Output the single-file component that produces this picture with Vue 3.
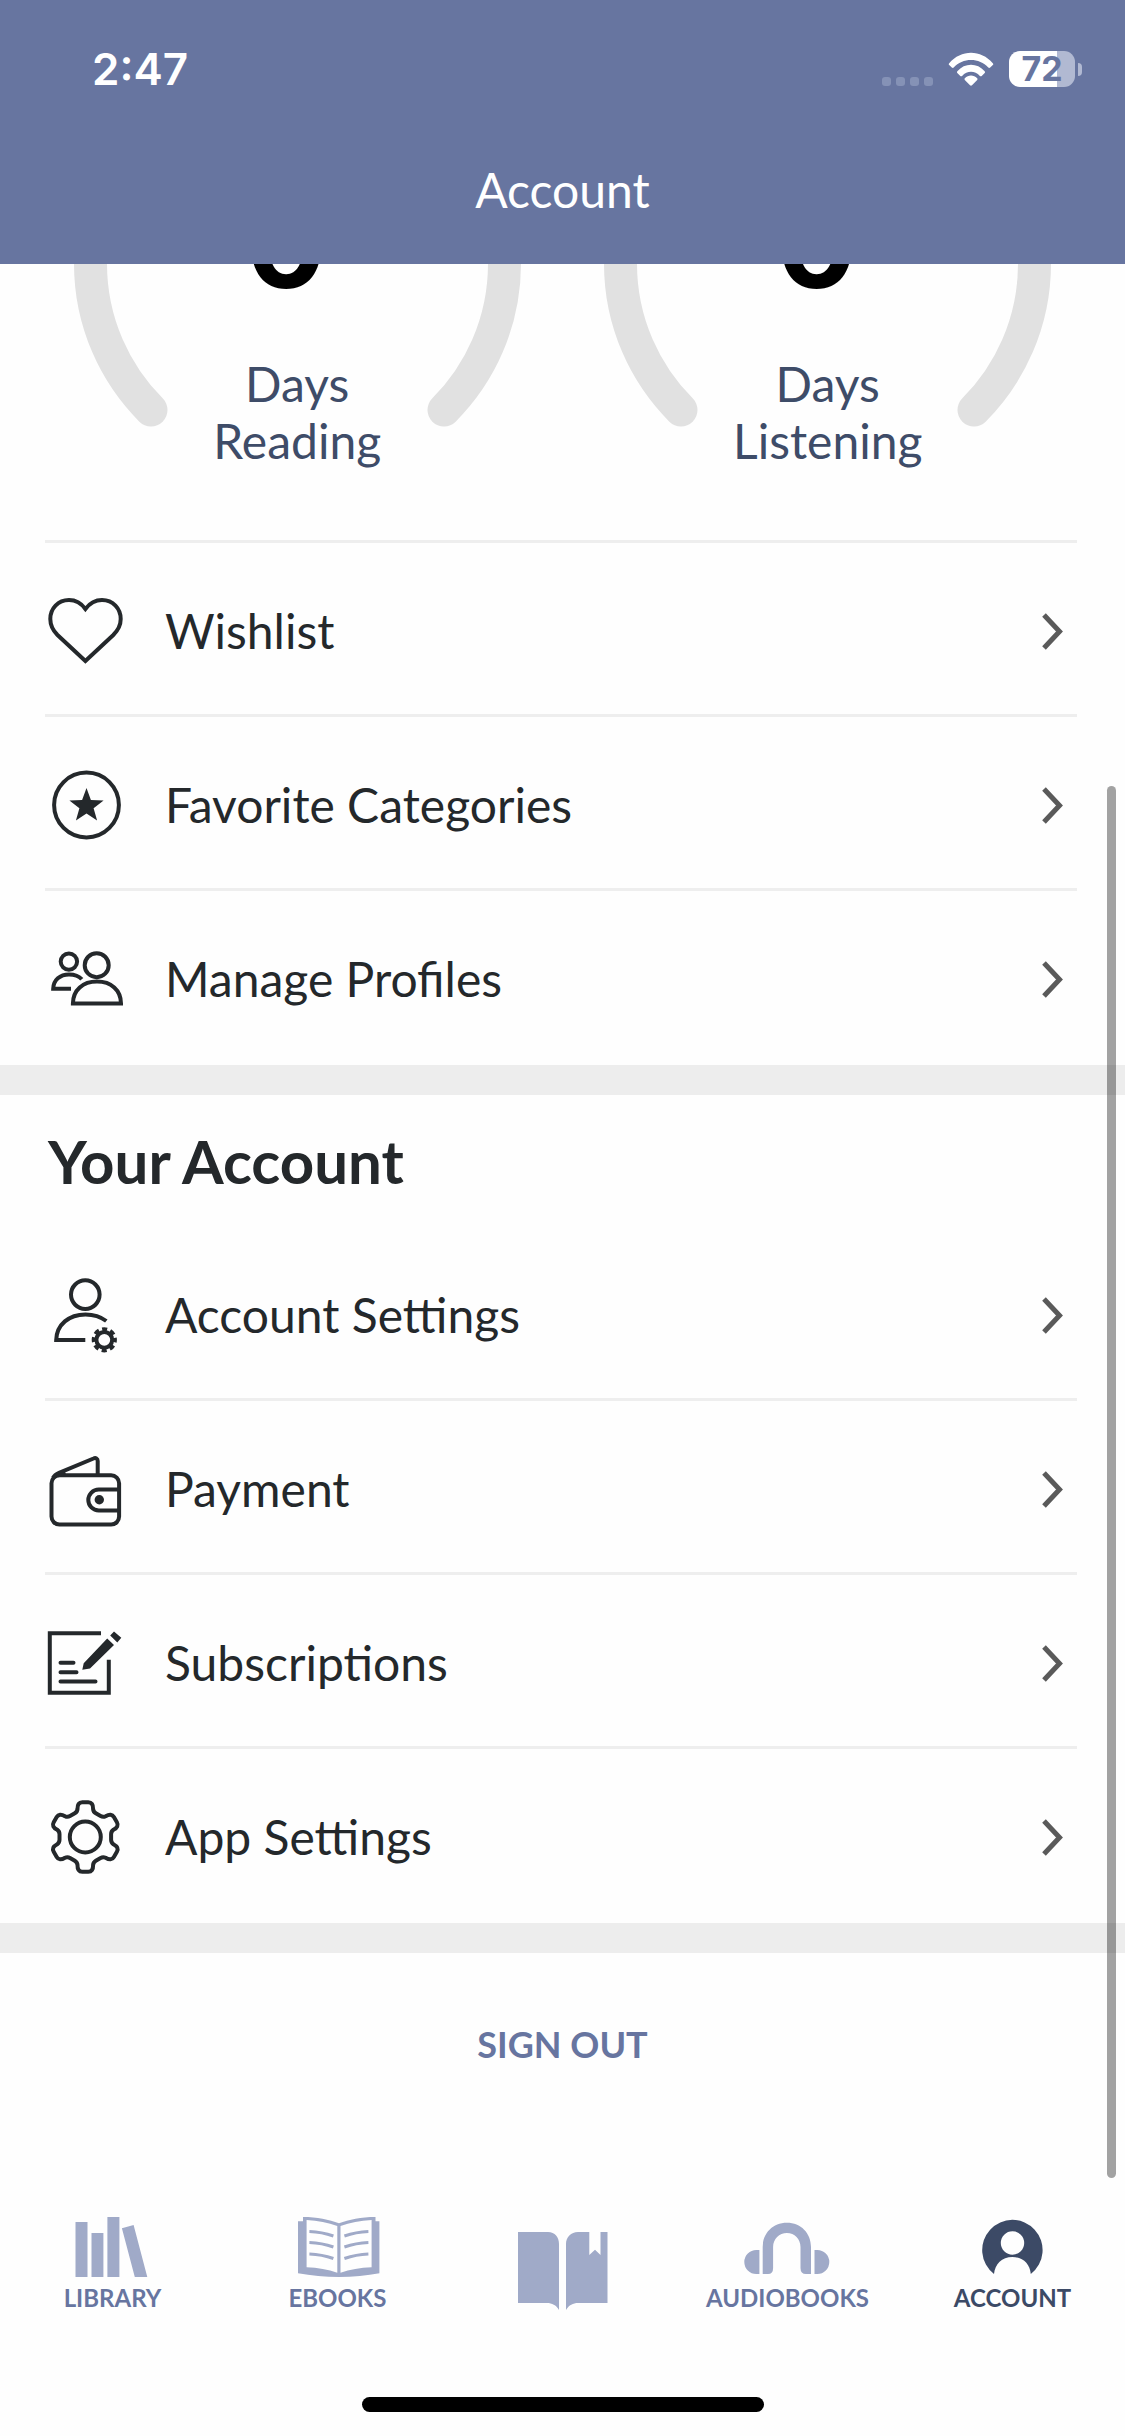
<script setup>
const stats = [
  { value: 0, lines: ['Days', 'Reading'] },
  { value: 0, lines: ['Days', 'Listening'] },
]

const groups = [
  {
    title: '',
    items: [
      { icon: 'heart', label: 'Wishlist' },
      { icon: 'star', label: 'Favorite Categories' },
      { icon: 'profiles', label: 'Manage Profiles' },
    ],
  },
  {
    title: 'Your Account',
    items: [
      { icon: 'user', label: 'Account Settings' },
      { icon: 'wallet', label: 'Payment' },
      { icon: 'subscription', label: 'Subscriptions' },
      { icon: 'gear', label: 'App Settings' },
    ],
  },
]

const tabs = [
  { icon: 'library', label: 'Library' },
  { icon: 'ebooks', label: 'Ebooks' },
  { icon: 'reader', label: '' },
  { icon: 'audiobooks', label: 'Audiobooks' },
  { icon: 'account', label: 'Account', active: true },
]

// Six rounded teeth, each one the first tooth turned by 60 degrees.
function gearOutline(cx, cy) {
  const point = (x, y, turn) => {
    const a = (turn * Math.PI) / 3
    const px = cx + x * Math.cos(a) - y * Math.sin(a)
    const py = cy + x * Math.sin(a) + y * Math.cos(a)
    return `${px.toFixed(1)} ${py.toFixed(1)}`
  }
  let d = ''
  for (let i = 0; i < 6; i++) {
    d += `${i ? 'L' : 'M'}${point(-10.5, -23.7, i)}`
    d += `Q${point(-8, -25.2, i)} ${point(-7.8, -28, i)}`
    d += `Q${point(-8, -34.7, i)} ${point(-3, -34.7, i)}`
    d += `L${point(3, -34.7, i)}`
    d += `Q${point(8, -34.7, i)} ${point(7.8, -28, i)}`
    d += `Q${point(8, -25.2, i)} ${point(10.5, -23.7, i)}`
  }
  return `${d}Z`
}
const gearPath = gearOutline(40.3, 39)
</script>

<template>
  <div class="screen">
    <header class="header">
      <div class="status">
        <time class="clock">2:47</time>
        <div class="indicators">
          <div class="signal"><i v-for="n in 4" :key="n"></i></div>
          <svg class="wifi" viewBox="0 0 46 34" aria-hidden="true">
            <path d="M1.2 11.2C13-2.8 33-2.8 44.8 11.2c.6.7.6 1.2 0 1.8l-2.6 2.6c-.6.6-1.3.6-1.9 0C31.5 5.6 14.5 5.6 5.7 15.6c-.6.6-1.3.6-1.9 0L1.2 13c-.6-.6-.6-1.1 0-1.8z" />
            <path d="M9.3 19.3c7.5-8.6 19.9-8.6 27.4 0 .5.6.5 1.2 0 1.7l-3 2.9c-.5.5-1.2.5-1.8 0-5-5.5-12.8-5.5-17.8 0-.6.5-1.3.5-1.8 0l-3-2.9c-.5-.5-.5-1.1 0-1.7z" />
            <path d="M16.8 26.3c3.5-3.7 8.9-3.7 12.4 0 .5.5.5 1.1 0 1.6l-5.2 5.3c-.6.6-1.4.6-2 0l-5.2-5.3c-.5-.5-.5-1.1 0-1.6z" />
          </svg>
          <div class="battery"><span class="level">72</span><i class="nub"></i></div>
        </div>
      </div>
      <h1 class="title">Account</h1>
    </header>

    <main class="content">
      <section class="stats">
        <div v-for="stat in stats" :key="stat.lines[1]" class="stat">
          <div class="gauge">
            <svg class="ring" viewBox="0 0 447 447" aria-hidden="true">
              <path d="M77 370A207 207 0 1 1 370 370" />
            </svg>
            <div class="reading">
              <strong class="value">{{ stat.value }}</strong>
              <span v-for="line in stat.lines" :key="line" class="caption">{{ line }}</span>
            </div>
          </div>
        </div>
      </section>

      <section v-for="group in groups" :key="group.title" class="group">
        <h2 v-if="group.title" class="heading">{{ group.title }}</h2>
        <nav class="rows" :class="{ titled: group.title }">
          <a v-for="item in group.items" :key="item.label" class="row" href="#">
            <svg class="icon" viewBox="0 0 78 78" aria-hidden="true">
              <path v-if="item.icon === 'heart'" d="M40.4 17C36 11 30.5 8.1 24 8.1C13 8.1 5.3 16.5 5.3 27C5.3 33.5 8 38.5 12.5 43L40.4 69L68.3 43C72.8 38.5 75.7 33.5 75.7 27C75.7 16.500 68 8.1 57 8.1C50.5 8.1 45 11 40.4 17Z" />
              <g v-else-if="item.icon === 'star'">
                <circle cx="41.5" cy="39" r="32.4" />
                <path class="solid" d="M41.5 22L45.9 33.9L58.6 34.4L48.6 42.3L52.1 54.6L41.5 47.5L30.9 54.6L34.4 42.3L24.4 34.4L37.1 33.9Z" />
              </g>
              <g v-else-if="item.icon === 'profiles'">
                <circle cx="23.9" cy="21.6" r="8.2" />
                <circle cx="51.7" cy="25.2" r="12" />
                <path d="M27.9 63.6C27.9 50 38 41.5 52 41.5S76 50 76 63.6Z" />
                <path d="M26 48.7H8.2C8.5 40 15 34.4 24 34.4C29.5 34.4 34 36 36.8 39.3" />
              </g>
              <g v-else-if="item.icon === 'user'">
                <circle cx="40.3" cy="18.6" r="14.3" />
                <path d="M40.3 64H11.2C11.7 48.5 24 38.4 40.5 38.4C48.5 38.4 55.5 40.5 61.3 45" />
                <circle cx="59.3" cy="63.8" r="7.9" />
                <circle class="teeth" cx="59.3" cy="63.8" r="10.6" />
              </g>
              <g v-else-if="item.icon === 'wallet'">
                <rect x="6.5" y="25.2" width="67.6" height="49.4" rx="8" />
                <path d="M8 28C9.5 25 11.5 23.8 14 22.8L48.5 8.5C50.7 7.5 52.7 8.5 52.7 11V25M13 25.5L20 22" />
                <path d="M74.3 39.5H53.8A10.5 10.5 0 0 0 53.8 60.5H74.3" />
                <circle class="solid" cx="54.3" cy="49.8" r="4.7" />
              </g>
              <g v-else-if="item.icon === 'subscription'">
                <path d="M56 9.3H4.8V68.7H63.8V35.8" />
                <path class="round" d="M15.5 38.8H28.5M15.5 48.2H31.5M15.5 57.5H50.5" />
                <path class="solid" d="M37.3 45.8L38.7 39.2L62.2 14.5L69 21.1L45 44.4ZM65.2 11.4L69 7.5L76.3 13.8L72.3 18.4Z" />
              </g>
              <g v-else>
                <circle cx="40.3" cy="39" r="15.5" />
                <path :d="gearPath" />
              </g>
            </svg>
            <span class="label">{{ item.label }}</span>
            <svg class="chevron" viewBox="0 0 24 40" aria-hidden="true">
              <path d="M3 4L18.5 20.5L3 37" />
            </svg>
          </a>
        </nav>
      </section>

      <div class="actions">
        <button class="signout" type="button">SIGN OUT</button>
      </div>
      <div class="scrollbar"></div>
    </main>

    <footer class="footer">
      <nav class="tabs">
        <a v-for="tab in tabs" :key="tab.icon" class="tab" :class="{ active: tab.active }" href="#">
          <svg v-if="tab.icon === 'reader'" class="tabicon tall" viewBox="0 0 90 80" aria-hidden="true">
            <path d="M0 0H30C37 0 41 5 41 12V78C38 73 34 71 29 71H0Z" />
            <path d="M89.5 0H82.5V23L77 17.7L71.3 23V0H60C53 0 48 5 48 12V78C51 73 55 71 60 71H89.5Z" />
          </svg>
          <svg v-else class="tabicon" viewBox="0 0 90 66" aria-hidden="true">
            <path v-if="tab.icon === 'library'" d="M7.5 8H19.5V63H7.5ZM23.5 19H35.4V63H23.5ZM39.4 3H51.4V63H39.4ZM53.9 14.3L65.6 11L79.3 63H66.8Z" />
            <g v-else-if="tab.icon === 'ebooks'">
              <path fill-rule="evenodd" d="M5 7.3H10V3C24 3 36 5.5 46 9.3C56 5.5 68 3 82.5 3V7.3H86.4V59.3C74 61.5 60 63 46 63S18 61.5 5 59.3ZM13.6 6C25 6.5 35 8.5 44.3 12V58.7C35 55.5 25 53.8 13.6 53.3ZM78.6 6C67 6.5 57 8.5 47.5 12V58.7C57 55.5 67 53.8 78.6 53.3Z" />
              <path class="lines" d="M16.4 17.5Q29 18 40.4 22M16.4 28.5Q29 29 40.4 33M16.4 40Q29 40.5 40.4 44.5M75.4 17.5Q63 18 51.4 22M75.4 28.5Q63 29 51.4 33M75.4 40Q63 40.5 51.4 44.5" />
            </g>
            <path v-else-if="tab.icon === 'audiobooks'" d="M19.7 60V33C19.7 19 30 8.7 43.9 8.7S68 19 68 33V60H63Q57.5 60 57.5 54V33C57.5 25 51.5 19 43.9 19S30.1 25 30.1 33V54Q30.1 60 25 60ZM16.4 36V60H13.3A12 12 0 0 1 13.3 36ZM71.5 36H74.3A12 12 0 0 1 74.3 60H71.5Z" />
            <path v-else fill-rule="evenodd" d="M26 60A30.2 30.2 0 1 1 62.8 60C62 50 55 43 44.4 43S27 50 26 60ZM44.5 17.3A11.7 11.7 0 1 0 44.5 40.7A11.7 11.7 0 1 0 44.5 17.3Z" />
          </svg>
          <span v-if="tab.label" class="tablabel">{{ tab.label }}</span>
        </a>
      </nav>
      <div class="home"></div>
    </footer>
  </div>
</template>

<style>
body {
  margin: 0;
  background: #fefefe;
}
</style>

<style scoped>
.screen {
  display: flex;
  flex-direction: column;
  min-height: 100vh;
  background: #fefefe;
  color: #24282b;
  font-family: Lato, "Liberation Sans", sans-serif;
}
a {
  color: inherit;
  text-decoration: none;
}
.header {
  padding-bottom: 22px;
  background: #6775a0;
  color: #fff;
}
.status {
  display: flex;
  align-items: center;
  justify-content: space-between;
  height: 138px;
  padding: 0 43px 0 92px;
  font-family: Inter, "Liberation Sans", sans-serif;
}
.clock {
  font-size: 44px;
  font-weight: 600;
}
.indicators {
  display: flex;
  align-items: center;
}
.signal {
  display: flex;
  gap: 5px;
  margin: 24px 15px 0 0;
}
.signal i {
  width: 9px;
  height: 9px;
  border-radius: 3px;
  background: #8592b6;
}
.wifi {
  width: 46px;
  height: 34px;
  margin-right: 15px;
  fill: #fff;
}
.battery {
  display: flex;
  align-items: center;
  gap: 3px;
}
.level {
  width: 66px;
  border-radius: 11px;
  background: linear-gradient(90deg, #fff 73%, #b1b9d2 73%);
  color: #6775a0;
  font-size: 34px;
  font-weight: 700;
  line-height: 36px;
  text-align: center;
}
.nub {
  width: 4px;
  height: 13px;
  border-radius: 0 4px 4px 0;
  background: #b1b9d2;
}
.title {
  margin: 0;
  font-size: 48px;
  font-weight: 400;
  line-height: 104px;
  text-align: center;
}
.content {
  position: relative;
  display: flex;
  flex: 1;
  flex-direction: column;
}
/* The gauges are scrolled half way under the header */
.stats {
  display: flex;
  align-items: flex-end;
  height: 223px;
  padding: 0 32px 53px;
  overflow: hidden;
}
.stat {
  display: flex;
  flex: 1;
  justify-content: center;
}
.gauge {
  display: grid;
  width: 447px;
}
.ring,
.reading {
  grid-area: 1 / 1;
}
.ring {
  width: 100%;
  fill: none;
  stroke: #e1e1e1;
  stroke-width: 33;
  stroke-linecap: round;
}
.reading {
  display: flex;
  flex-direction: column;
  align-items: center;
  justify-content: flex-end;
  padding-bottom: 18px;
}
.value {
  margin-bottom: 50px;
  padding-right: 22px;
  color: #000;
  font-family: Inter, "Liberation Sans", sans-serif;
  font-size: 120px;
  font-weight: 700;
  line-height: 120px;
}
.caption {
  color: #3e4c68;
  font-size: 48px;
  line-height: 57px;
}
.group {
  border-bottom: 30px solid #ededed;
}
.heading {
  margin: 0;
  padding: 30px 48px;
  font-size: 60px;
  font-weight: 700;
  line-height: 72px;
}
.rows {
  padding: 0 48px 3px 45px;
}
.row {
  display: flex;
  align-items: center;
  height: 167px;
  padding-top: 4px;
  border-top: 3px solid #eee;
}
.titled .row:first-child {
  border-top: 0;
}
.icon {
  width: 78px;
  height: 78px;
  margin-right: 42px;
  fill: none;
  stroke: #24282b;
  stroke-width: 4;
}
.icon .solid {
  fill: #24282b;
  stroke: none;
}
.icon .round {
  stroke-linecap: round;
}
/* Eight dashes round the small cog */
.icon .teeth {
  stroke-dasharray: 5 3.325;
  stroke-dashoffset: 2.5;
}
.label {
  flex: 1;
  font-size: 48px;
  line-height: 58px;
}
.chevron {
  width: 24px;
  height: 40px;
  margin-right: 12px;
  fill: none;
  stroke: #5a5a5a;
  stroke-width: 5;
}
.actions {
  display: flex;
  justify-content: center;
  padding-top: 60px;
}
.signout {
  padding: 10px 24px;
  border: 0;
  background: none;
  color: #6775a0;
  font: 700 36px/43px Lato, "Liberation Sans", sans-serif;
}
.scrollbar {
  position: absolute;
  right: 9px;
  bottom: 36px;
  width: 9px;
  height: 71.4%;
  border-radius: 5px;
  background: rgba(0, 0, 0, 0.36);
}
.tabs {
  display: flex;
  align-items: flex-end;
}
.tab {
  display: flex;
  flex: 1;
  flex-direction: column;
  align-items: center;
  gap: 3px;
  color: #6775a0;
}
.tabicon {
  width: 90px;
  height: 66px;
  fill: #a0aac8;
}
.tabicon.tall {
  height: 80px;
}
.tabicon .lines {
  fill: none;
  stroke: #a0aac8;
  stroke-width: 3;
}
.tablabel {
  font-size: 24px;
  font-weight: 700;
  line-height: 29px;
  text-transform: uppercase;
}
.tab.active {
  color: #3c4a66;
}
.active .tabicon {
  fill: #3c4a66;
}
.home {
  width: 402px;
  height: 15px;
  margin: 85px auto 24px;
  border-radius: 8px;
  background: #000;
}
</style>
